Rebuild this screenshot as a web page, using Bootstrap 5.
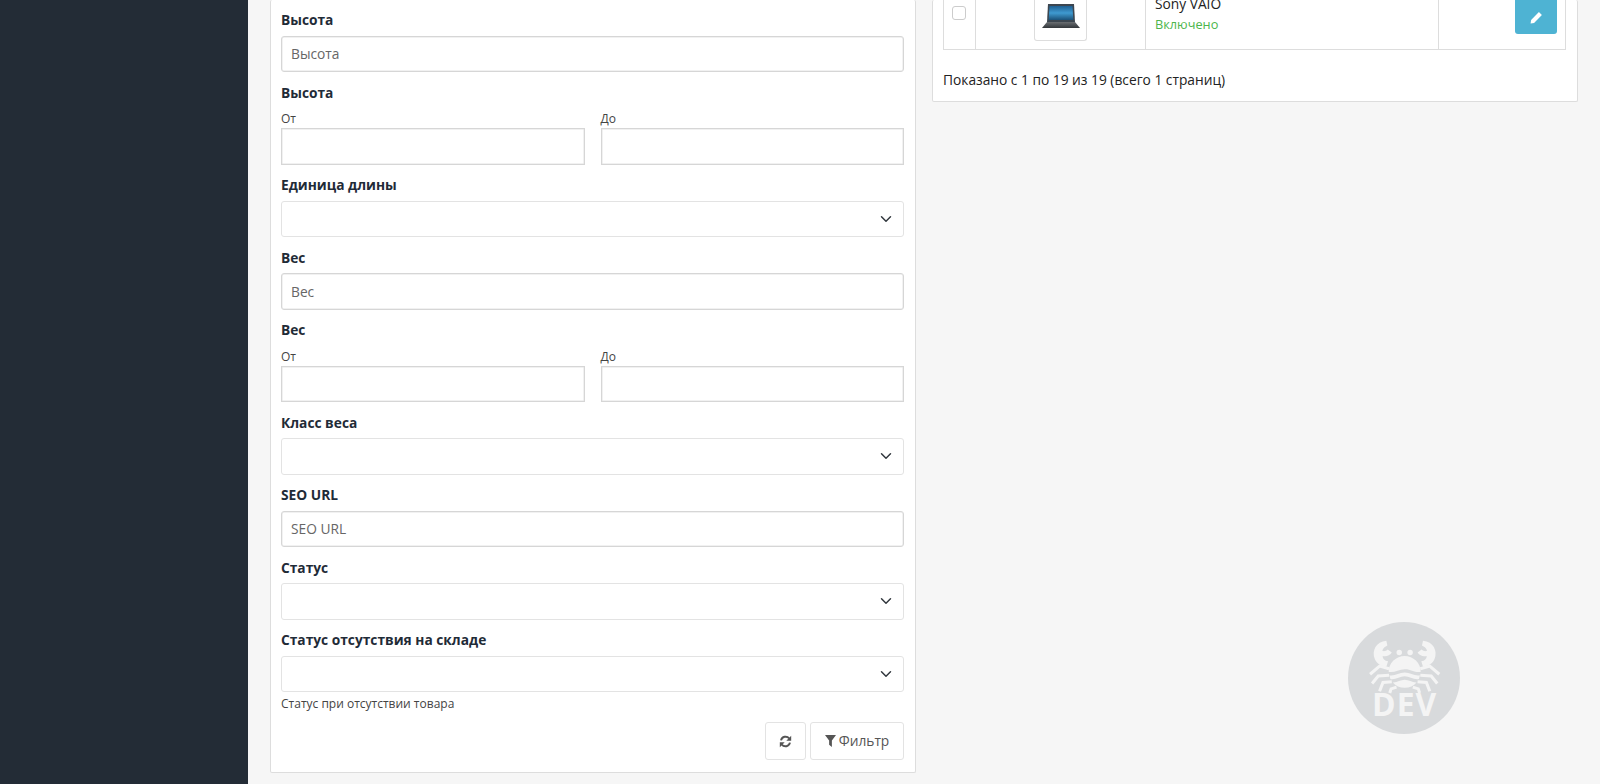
<!DOCTYPE html>
<html lang="ru">
<head>
<meta charset="utf-8">
<title>Товары</title>
<link rel="stylesheet" href="https://cdn.jsdelivr.net/npm/bootstrap@5.3.0/dist/css/bootstrap.min.css">
<style>
html,body{height:784px;overflow:hidden}
body{background:#f6f6f6;font-family:"Open Sans","Liberation Sans",sans-serif;font-size:13.75px;color:#1f2b37}
.shell{height:784px;overflow:hidden}
.side-rail{width:248px;background:#232c36;flex:none}
.work-area{flex:1;padding:0 22px 0 22px;min-width:0;gap:16px}
.filter-col{width:646px;flex:none}
.list-col{flex:1;min-width:0}
.panel{background:#fff;border:1px solid #ddd;border-radius:2px;border-top:0}
.filter-panel{height:773px;padding:9px 11px 0 10px}
.list-panel{height:102px;padding:0 11px 0 10px;overflow:hidden}
.fld{margin-bottom:9.5px}
.fld-label{font-weight:700;font-size:13.75px;line-height:21px;margin-bottom:5.5px;display:block;color:#1f2b37}
.sub-label{font-size:12px;line-height:14px;margin-bottom:2px;display:block;color:#444;margin-top:9.5px}
.form-control,.form-select{height:36.5px;border:1px solid #d6d6d6;border-radius:3px;font-size:13.75px;padding:0 9px;color:#555;box-shadow:inset 0 0 0 .5px #e4e4e4}
.form-control::placeholder{color:#666;opacity:1}
.range-input{height:36.5px;border-radius:0}
.form-select{border-color:#e3e3e3;box-shadow:none;background-size:16px 12px;background-position:right 9px center}
.help-line{font-size:12px;line-height:16px;color:#444;margin-top:4px}
.tool-btn{height:38px;background:#fff;border:1px solid #e3e3e3;border-radius:3px;color:#555;font-size:13.75px;padding:0;display:inline-flex;align-items:center;justify-content:center;gap:3px}
.tool-btn:hover{background:#fff;color:#555;border-color:#e3e3e3}
.tool-refresh{width:41px}
.tool-filter{width:94px}
.btn-row{margin-top:10px;gap:4px}
.tbl-clip{height:50px;overflow:hidden;border:1px solid #ddd;border-top:0;margin:0;display:flex}
.cell-check{width:32px;border-right:1px solid #ddd;flex:none;padding:6px 0 0 8px}
.fake-check{display:block;width:14px;height:14px;border:1px solid #ccc;border-radius:3px;background:#fff}
.cell-thumb{width:170px;border-right:1px solid #ddd;flex:none;display:flex;justify-content:center}
.thumb-box{width:53px;height:41px;border:1px solid #ddd;border-top:0;border-radius:0 0 3px 3px;display:flex;align-items:center;justify-content:center;padding-bottom:8px}
.cell-name{width:293px;border-right:1px solid #ddd;flex:none;padding-left:9px;line-height:21px;margin-top:-7px;color:#222}
.cell-name span{display:block}
.state-on{color:#4cb64c;font-size:12.75px;margin-top:0}
.cell-action{flex:1;display:flex;justify-content:flex-end;padding-right:8px}
.edit-btn{width:42px;height:34px;background:#4eb3d3;border:0;border-radius:0 0 3px 3px;display:flex;align-items:center;justify-content:center;padding:0}
.shown-line{margin:19px 0 0;line-height:21px;color:#222}
.watermark{position:absolute;left:1348px;top:622px;width:112px;height:112px}
.wm-text{font-family:"Open Sans","Liberation Sans",sans-serif;font-weight:700;font-size:94px;fill:#f4f4f4;letter-spacing:3px}
</style>
</head>
<body>
<div class="shell d-flex position-relative">
  <aside class="side-rail"></aside>
  <main class="work-area d-flex align-items-start">
    <section class="filter-col">
      <div class="panel filter-panel">
        <div class="fld"><label class="fld-label">Высота</label><input class="form-control" placeholder="Высота"></div>
        <div class="fld">
          <label class="fld-label mb-0">Высота</label>
          <div class="row gx-3">
            <div class="col-6"><label class="sub-label">От</label><input class="form-control range-input"></div>
            <div class="col-6"><label class="sub-label">До</label><input class="form-control range-input"></div>
          </div>
        </div>
        <div class="fld"><label class="fld-label">Единица длины</label><select class="form-select"><option></option></select></div>
        <div class="fld"><label class="fld-label">Вес</label><input class="form-control" placeholder="Вес"></div>
        <div class="fld">
          <label class="fld-label mb-0">Вес</label>
          <div class="row gx-3">
            <div class="col-6"><label class="sub-label">От</label><input class="form-control range-input"></div>
            <div class="col-6"><label class="sub-label">До</label><input class="form-control range-input"></div>
          </div>
        </div>
        <div class="fld"><label class="fld-label">Класс веса</label><select class="form-select"><option></option></select></div>
        <div class="fld"><label class="fld-label">SEO URL</label><input class="form-control" placeholder="SEO URL"></div>
        <div class="fld"><label class="fld-label">Статус</label><select class="form-select"><option></option></select></div>
        <div>
          <label class="fld-label">Статус отсутствия на складе</label><select class="form-select"><option></option></select>
          <div class="help-line">Статус при отсутствии товара</div>
        </div>
        <div class="d-flex justify-content-end btn-row">
          <button class="btn tool-btn tool-refresh" type="button" aria-label="Сброс">
            <svg width="13" height="13" viewBox="0 0 16 16" fill="none"><path d="M2.5 6.6A5.7 5.7 0 0 1 12.6 4.3" stroke="#555" stroke-width="2.4"/><path d="M15 1v6H9z" fill="#555"/><path d="M13.5 9.4A5.7 5.7 0 0 1 3.4 11.7" stroke="#555" stroke-width="2.4"/><path d="M1 15V9h6z" fill="#555"/></svg>
          </button>
          <button class="btn tool-btn tool-filter" type="button">
            <svg width="11" height="12" viewBox="0 0 12 13"><path d="M0 0h12L7.5 6v7L4.5 10.5V6z" fill="#555"/></svg>Фильтр
          </button>
        </div>
      </div>
    </section>
    <section class="list-col">
      <div class="panel list-panel">
        <div class="tbl-clip">
          <div class="cell-check"><span class="fake-check"></span></div>
          <div class="cell-thumb"><div class="thumb-box">
            <svg width="40" height="25" viewBox="0 0 40 25"><defs><linearGradient id="scr" x1="0" y1="0" x2="0" y2="1"><stop offset="0" stop-color="#1f5f92"/><stop offset=".5" stop-color="#3f9ad0"/><stop offset="1" stop-color="#1b5178"/></linearGradient><linearGradient id="deck" x1="0" y1="0" x2="0" y2="1"><stop offset="0" stop-color="#6a6e72"/><stop offset="1" stop-color="#33373b"/></linearGradient></defs><path d="M7 0h26l1 18H6z" fill="#3c4650"/><path d="M8.500 2h23l.8 14H7.700z" fill="url(#scr)"/><path d="M6 18h28l5 6H1z" fill="url(#deck)"/></svg>
          </div></div>
          <div class="cell-name"><span>Sony VAIO</span><span class="state-on">Включено</span></div>
          <div class="cell-action"><button class="edit-btn" type="button" aria-label="Изменить">
            <svg width="13" height="13" viewBox="0 0 14 14"><path d="M9.600 1.200l3.200 3.200-8.400 8.400L.6 13.400l.6-3.800z" fill="#fff"/></svg>
          </button></div>
        </div>
        <p class="shown-line">Показано с 1 по 19 из 19 (всего 1 страниц)</p>
      </div>
    </section>
  </main>
  <svg class="watermark" viewBox="55 40 330 330" aria-label="DEV">
    <circle cx="220" cy="205" r="165" fill="#d8dadc"/>
    <g fill="#f4f4f4">
      <path d="M168 95c-30 2-44 30-34 54 6 14 20 22 34 23l5-16c-10-2-16-8-16-16 10 3 20 0 27-10l-12-9c-5 5-11 6-16 4 2-8 8-13 15-16z"/>
      <path d="M276 95c30 2 44 30 34 54-6 14-20 22-34 23l-5-16c10-2 16-8 16-16-10 3-20 0-27-10l12-9c5 5 11 6 16 4-2-8-8-13-15-16z"/>
      <circle cx="206" cy="130" r="8"/><circle cx="238" cy="130" r="8"/>
      <path d="M175 187a47 47 0 0 1 94 0c-18 3-29-9-47-8s-30 11-47 8z"/>
      <path d="M177 197c16 3 28-8 45-8s29 11 45 8l-3 11c-14 3-28-8-42-8s-28 11-42 8z"/>
      <path d="M187 218c12 1 23-8 35-8s23 9 35 8c-8 10-21 16-35 16s-27-6-35-16z"/>
    </g>
    <g fill="none" stroke="#f4f4f4" stroke-width="9">
      <path d="M176 178l-28-8-28 24"/><path d="M176 197l-32 2-18 22"/><path d="M184 216l-26 2-10 26"/>
      <path d="M268 178l28-8 28 24"/><path d="M268 197l32 2 18 22"/><path d="M260 216l26 2 10 26"/>
      <path d="M198 232l-16 5-4 12"/><path d="M246 232l16 5 4 12"/>
    </g>
    <text class="wm-text" x="222" y="316" text-anchor="middle">DEV</text>
  </svg>
</div>
<script src="https://cdn.jsdelivr.net/npm/bootstrap@5.3.0/dist/js/bootstrap.bundle.min.js"></script>
</body>
</html>
